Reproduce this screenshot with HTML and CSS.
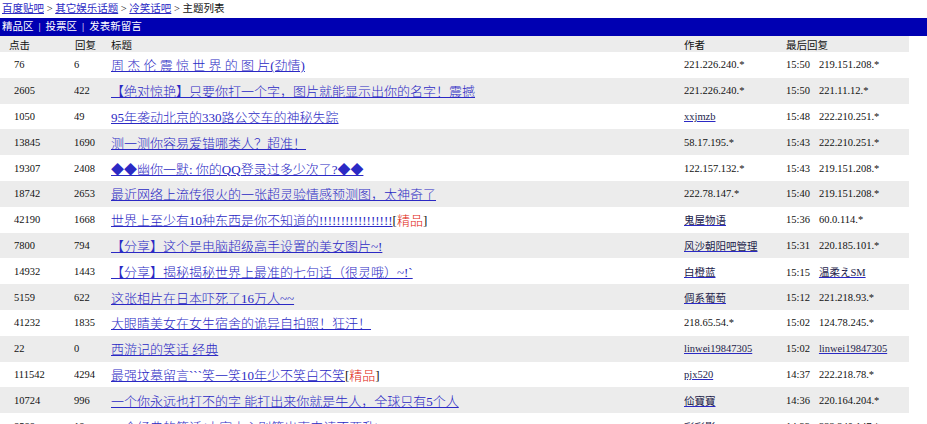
FILE: index.html
```html
<!DOCTYPE html>
<html>
<head>
  <meta charset="utf-8">
  <title>冷笑话吧 - 主题列表</title>
  <link rel="stylesheet" href="styles.css">
</head>
<body>

  <!-- breadcrumb -->
  <div class="crumbs">
    <a href="#">百度贴吧</a> &gt; <a href="#">其它娱乐话题</a> &gt; <a href="#">冷笑话吧</a> &gt; 主题列表
  </div>

  <!-- blue menu bar -->
  <div class="menu-bar">
    <a href="#">精品区</a><span class="sep">|</span><a href="#">投票区</a><span class="sep">|</span><a href="#">发表新留言</a>
  </div>

  <table class="topics">
    <thead>
      <tr>
        <th class="c-hits">点击</th>
        <th class="c-reply">回复</th>
        <th class="c-title">标题</th>
        <th class="c-author">作者</th>
        <th class="c-last">最后回复</th>
      </tr>
    </thead>
    <tbody>
      <tr>
        <td class="c-hits">76</td><td class="c-reply">6</td>
        <td class="c-title"><a href="#">周 杰 伦 震 惊 世 界 的 图 片(劲情)</a></td>
        <td class="c-author">221.226.240.*</td>
        <td class="c-last"><span class="time">15:50</span>219.151.208.*</td>
      </tr>
      <tr>
        <td class="c-hits">2605</td><td class="c-reply">422</td>
        <td class="c-title"><a href="#">【绝对惊艳】只要你打一个字，图片就能显示出你的名字！震撼</a></td>
        <td class="c-author">221.226.240.*</td>
        <td class="c-last"><span class="time">15:50</span>221.11.12.*</td>
      </tr>
      <tr>
        <td class="c-hits">1050</td><td class="c-reply">49</td>
        <td class="c-title"><a href="#">95年袭动北京的330路公交车的神秘失踪</a></td>
        <td class="c-author"><a class="user" href="#">xxjmzb</a></td>
        <td class="c-last"><span class="time">15:48</span>222.210.251.*</td>
      </tr>
      <tr>
        <td class="c-hits">13845</td><td class="c-reply">1690</td>
        <td class="c-title"><a href="#">测一测你容易爱错哪类人？超准！</a></td>
        <td class="c-author">58.17.195.*</td>
        <td class="c-last"><span class="time">15:43</span>222.210.251.*</td>
      </tr>
      <tr>
        <td class="c-hits">19307</td><td class="c-reply">2408</td>
        <td class="c-title"><a href="#">◆◆幽你一默: 你的QQ登录过多少次了?◆◆</a></td>
        <td class="c-author">122.157.132.*</td>
        <td class="c-last"><span class="time">15:43</span>219.151.208.*</td>
      </tr>
      <tr>
        <td class="c-hits">18742</td><td class="c-reply">2653</td>
        <td class="c-title"><a href="#">最近网络上流传很火的一张超灵验情感预测图，太神奇了</a></td>
        <td class="c-author">222.78.147.*</td>
        <td class="c-last"><span class="time">15:40</span>219.151.208.*</td>
      </tr>
      <tr>
        <td class="c-hits">42190</td><td class="c-reply">1668</td>
        <td class="c-title"><a href="#">世界上至少有10种东西是你不知道的!!!!!!!!!!!!!!!!!</a>[<span class="good">精品</span>]</td>
        <td class="c-author"><a class="user" href="#">鬼屋物语</a></td>
        <td class="c-last"><span class="time">15:36</span>60.0.114.*</td>
      </tr>
      <tr>
        <td class="c-hits">7800</td><td class="c-reply">794</td>
        <td class="c-title"><a href="#">【分享】这个是电脑超级高手设置的美女图片~!</a></td>
        <td class="c-author"><a class="user" href="#">风沙朝阳吧管理</a></td>
        <td class="c-last"><span class="time">15:31</span>220.185.101.*</td>
      </tr>
      <tr>
        <td class="c-hits">14932</td><td class="c-reply">1443</td>
        <td class="c-title"><a href="#">【分享】揭秘揭秘世界上最准的七句话（很灵哦）~!`</a></td>
        <td class="c-author"><a class="user" href="#">白橙蓝</a></td>
        <td class="c-last"><span class="time">15:15</span><a class="user" href="#">温柔えSM</a></td>
      </tr>
      <tr>
        <td class="c-hits">5159</td><td class="c-reply">622</td>
        <td class="c-title"><a href="#">这张相片在日本吓死了16万人~~</a></td>
        <td class="c-author"><a class="user" href="#">倜系葡萄</a></td>
        <td class="c-last"><span class="time">15:12</span>221.218.93.*</td>
      </tr>
      <tr>
        <td class="c-hits">41232</td><td class="c-reply">1835</td>
        <td class="c-title"><a href="#">大眼睛美女在女生宿舍的诡异自拍照！狂汗！</a></td>
        <td class="c-author">218.65.54.*</td>
        <td class="c-last"><span class="time">15:02</span>124.78.245.*</td>
      </tr>
      <tr>
        <td class="c-hits">22</td><td class="c-reply">0</td>
        <td class="c-title"><a href="#">西游记的笑话 经典</a></td>
        <td class="c-author"><a class="user" href="#">linwei19847305</a></td>
        <td class="c-last"><span class="time">15:02</span><a class="user" href="#">linwei19847305</a></td>
      </tr>
      <tr>
        <td class="c-hits">111542</td><td class="c-reply">4294</td>
        <td class="c-title"><a href="#">最强坟墓留言```笑一笑10年少不笑白不笑</a>[<span class="good">精品</span>]</td>
        <td class="c-author"><a class="user" href="#">pjx520</a></td>
        <td class="c-last"><span class="time">14:37</span>222.218.78.*</td>
      </tr>
      <tr>
        <td class="c-hits">10724</td><td class="c-reply">996</td>
        <td class="c-title"><a href="#">一个你永远也打不的字 能打出来你就是牛人，全球只有5个人</a></td>
        <td class="c-author"><a class="user" href="#">佡寶寶</a></td>
        <td class="c-last"><span class="time">14:36</span>220.164.204.*</td>
      </tr>
      <tr>
        <td class="c-hits">8588</td><td class="c-reply">18</td>
        <td class="c-title"><a href="#">一个经典的笑话(大家小心别笑出声来请不要乱)</a></td>
        <td class="c-author"><a class="user" href="#">彩彩影</a></td>
        <td class="c-last"><span class="time">14:33</span>222.240.147.*</td>
      </tr>
    </tbody>
  </table>

</body>
</html>
```

FILE: styles.css
```css
body {
  margin: 0;
  background: #fff;
  color: #111;
  font-family: "Liberation Serif", "Noto Sans CJK SC", serif;
  font-size: 10.5px;
}

a {
  color: #2b29c4;
}

.crumbs {
  height: 18px;
  line-height: 17px;
  padding-left: 2px;
}

.crumbs a {
  color: #2b29c4;
}

.menu-bar {
  height: 18px;
  line-height: 18px;
  background-color: #0000b2;
  padding-left: 2px;
}

.menu-bar a {
  color: #fff;
  text-decoration: none;
}

.menu-bar .sep {
  color: #fff;
  margin: 0 5px;
}

.topics {
  width: 909px;
  border-collapse: collapse;
  table-layout: fixed;
}

.topics th,
.topics td {
  box-sizing: border-box;
  padding: 0;
  text-align: left;
  white-space: nowrap;
  overflow: hidden;
}

.topics th {
  height: 16px;
  font-weight: normal;
  background-color: #ececec;
}

.topics td {
  height: 25.8px;
}

.topics tbody tr:nth-child(even) td {
  background-color: #ececec;
}

/* column widths */
.c-hits   { width: 74px; }
.c-reply  { width: 37px; }
.c-title  { width: 573px; }
.c-author { width: 102px; }

td.c-hits { padding-left: 14px; }
th.c-hits { padding-left: 9px; }
th.c-reply { padding-left: 1px; }

.topics td.c-title {
  font-size: 13px;
  font-weight: 300;
}

.topics td.c-title a {
  color: #2b29c4;
}

.good {
  color: #e0200c;
}

a.user {
  color: #1c1c4a;
  text-decoration-color: #2b29c4;
}

.time {
  margin-right: 9px;
}
```
